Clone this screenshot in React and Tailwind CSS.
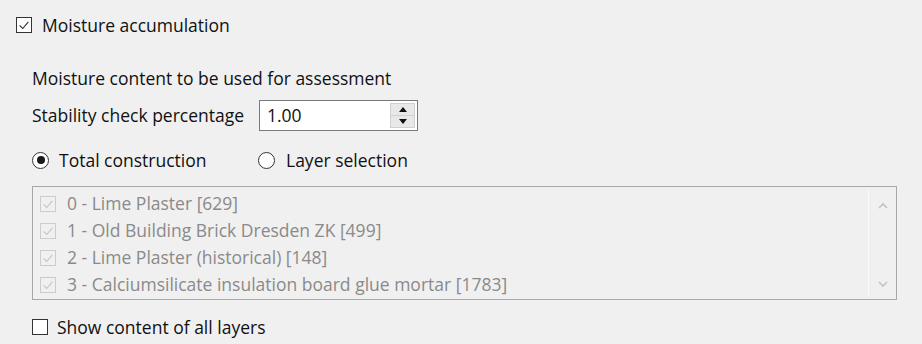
import React from 'react';

const font = { fontFamily: '"Open Sans", "Noto Sans", sans-serif' };

const Check = ({ color }) => (
    <svg viewBox="0 0 16 16" className="w-full h-full">
        <polyline points="3,8.5 6.5,12 13,4.5" fill="none" stroke={color} strokeWidth="1.3" />
    </svg>
);

const CheckBox = ({ checked, disabled }) => (
    <div className={`w-[16px] h-[16px] shrink-0 border ${disabled ? 'border-[#cccccc] bg-[#f0f0f0]' : 'border-[#333333] bg-white'}`}>
        {checked && <Check color={disabled ? '#c4c4c4' : '#333333'} />}
    </div>
);

const Radio = ({ checked }) => (
    <div className="w-[17px] h-[17px] shrink-0 rounded-full border border-[#333333] bg-white flex items-center justify-center">
        {checked && <div className="w-[8px] h-[8px] rounded-full bg-[#1a1a1a]" />}
    </div>
);

const layers = [
    '0 - Lime Plaster [629]',
    '1 - Old Building Brick Dresden ZK [499]',
    '2 - Lime Plaster (historical) [148]',
    '3 - Calciumsilicate insulation board glue mortar [1783]',
];

export default function App() {
    return (
        <div className="w-[922px] h-[344px] bg-[#f0f0f0] text-[17.5px] text-[#111] overflow-hidden" style={font}>
            <div className="pl-[16px] pt-[15px] h-[35px] flex items-center gap-[10px]">
                <CheckBox checked />
                <span>Moisture accumulation</span>
            </div>

            <div className="pl-[32px]">
                <div className="mt-[33px] h-[20px] flex items-center">Moisture content to be used for assessment</div>

                <div className="mt-[12px] flex items-center">
                    <span className="w-[227px]">Stability check percentage</span>
                    <div className="w-[159px] h-[31px] bg-white border border-[#7a7a7a] flex items-center justify-between pl-[7px] pr-[2px]">
                        <span>1.00</span>
                        <div className="w-[25px] h-[25px] flex flex-col border border-[#d0d0d0]">
                            <div className="flex-1 bg-[#e8e8e8] border-b border-[#d0d0d0] flex items-center justify-center">
                                <svg width="8" height="5" viewBox="0 0 8 5"><polygon points="4,0 8,5 0,5" fill="#111" /></svg>
                            </div>
                            <div className="flex-1 bg-[#e8e8e8] flex items-center justify-center">
                                <svg width="8" height="5" viewBox="0 0 8 5"><polygon points="0,0 8,0 4,5" fill="#111" /></svg>
                            </div>
                        </div>
                    </div>
                </div>

                <div className="mt-[19px] h-[20px] flex items-center">
                    <div className="flex items-center gap-[10px] w-[226px]">
                        <Radio checked />
                        <span>Total construction</span>
                    </div>
                    <div className="flex items-center gap-[11px]">
                        <Radio />
                        <span>Layer selection</span>
                    </div>
                </div>

                <div className="mt-[16px] w-[865px] h-[114px] border border-[#a8a8a8] flex">
                    <div className="flex-1 pt-[3px] pl-[7px]">
                        {layers.map((l) => (
                            <div key={l} className="h-[27px] flex items-center gap-[11px] text-[#8a8a8a]">
                                <CheckBox checked disabled />
                                <span>{l}</span>
                            </div>
                        ))}
                    </div>
                    <div className="w-[28px] border-l border-[#fafafa] my-[3px] flex flex-col items-center justify-between pt-[12px] pb-[8px]">
                        <svg width="10" height="7" viewBox="0 0 10 7"><polyline points="1,6 5,2 9,6" fill="none" stroke="#c2c2c2" strokeWidth="1.6" /></svg>
                        <svg width="10" height="7" viewBox="0 0 10 7"><polyline points="1,1 5,5 9,1" fill="none" stroke="#c2c2c2" strokeWidth="1.6" /></svg>
                    </div>
                </div>

                <div className="mt-[17px] h-[20px] flex items-center gap-[9px]">
                    <CheckBox />
                    <span>Show content of all layers</span>
                </div>
            </div>
        </div>
    );
}
